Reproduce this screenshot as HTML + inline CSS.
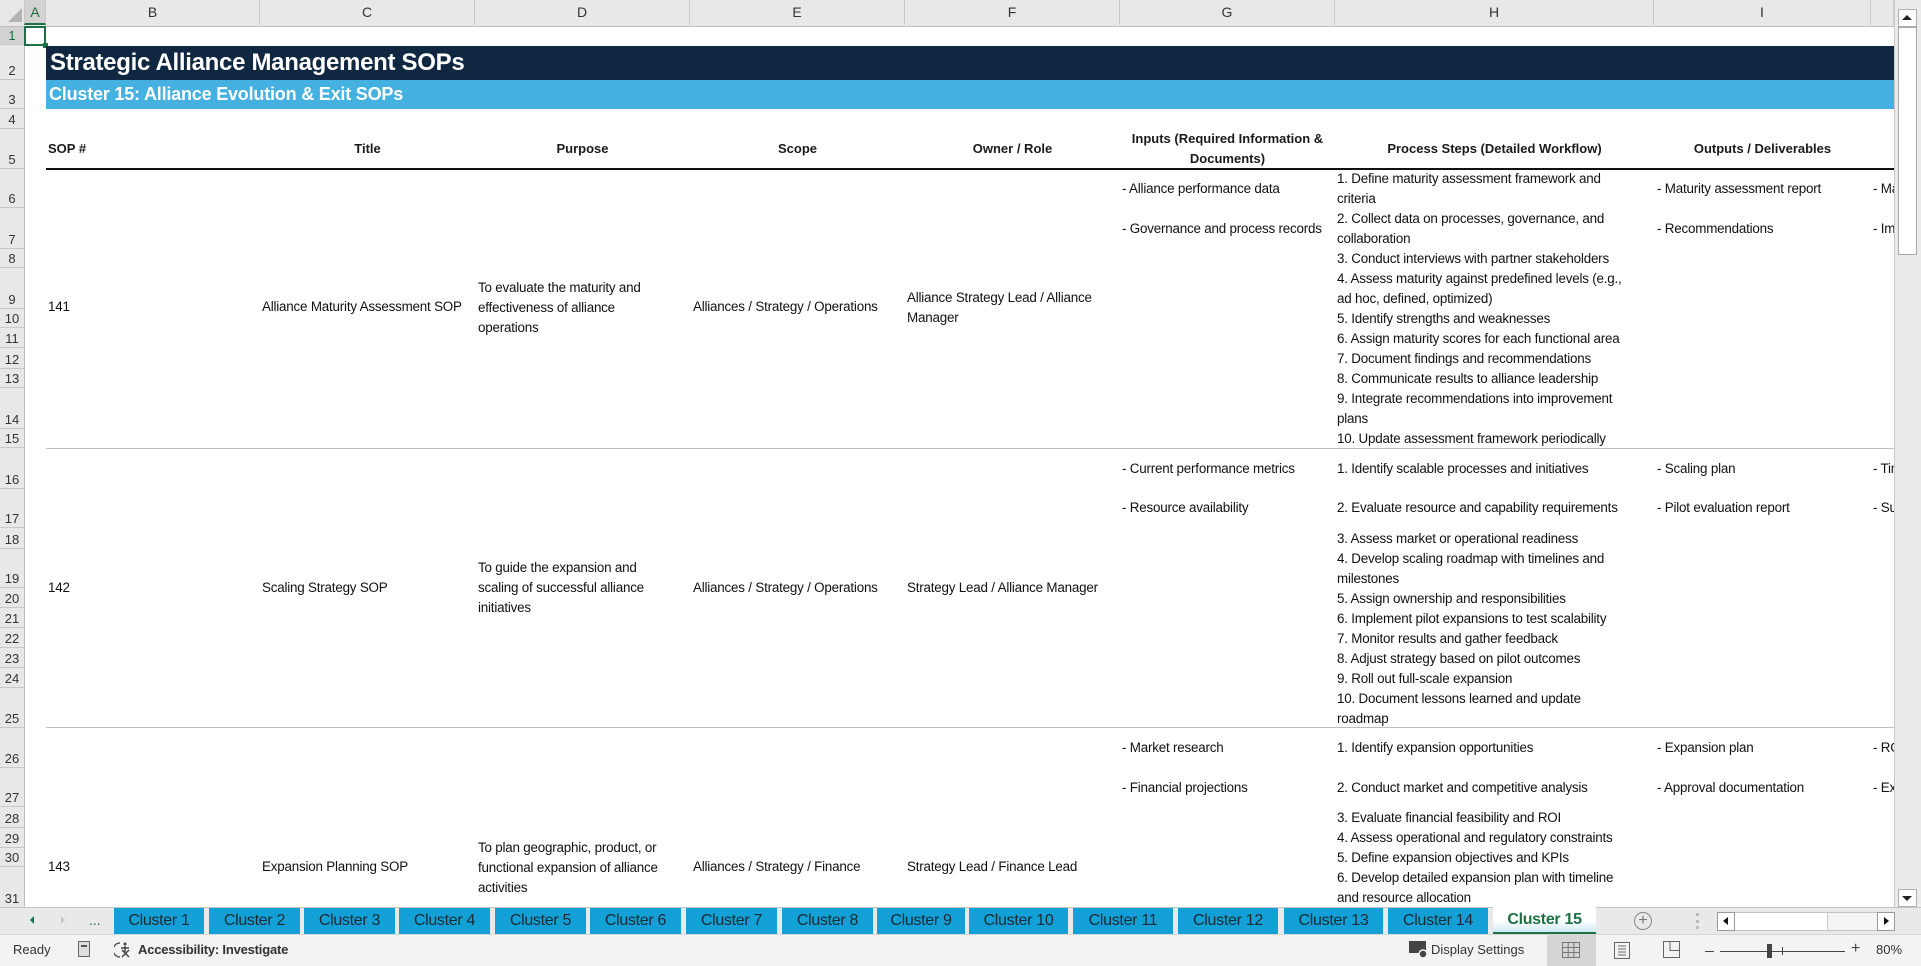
<!DOCTYPE html>
<html><head><meta charset="utf-8"><style>
*{margin:0;padding:0;box-sizing:border-box}
body{width:1921px;height:966px;overflow:hidden;background:#fff;font-family:"Liberation Sans",sans-serif;color:#1a1a1a;position:relative}
.a{position:absolute}
.t{position:absolute;white-space:nowrap;font-size:13.4px;line-height:20px;letter-spacing:-0.2px;color:#111}
.ch{position:absolute;top:0;height:25px;border-right:1px solid #c8c8c8;text-align:center;font-size:14px;line-height:25px;color:#333}
.rh{position:absolute;left:0;width:24px;border-bottom:1px solid #c8c8c8;text-align:center;font-size:13px;color:#333;display:flex;align-items:flex-end;justify-content:center;padding-bottom:1px;background:#e8e8e8}
.hd{position:absolute;top:129px;height:40px;font-weight:bold;font-size:13px;text-align:center;display:flex;align-items:center;justify-content:center;line-height:20px}
.tab{position:absolute;top:908px;height:26px;background:#12a0d6;font-size:16px;line-height:26px;text-align:center;color:#1b2a33;letter-spacing:-0.3px}
</style></head><body>
<div class="a" style="left:0;top:0;width:1921px;height:27px;background:#e8e8e8;border-bottom:1px solid #bdbdbd"></div>
<div class="a" style="left:8px;top:8px;width:0;height:0;border-left:14px solid transparent;border-bottom:14px solid #b4b4b4"></div>
<div class="ch" style="left:24px;width:22px;background:#d2d2d2;color:#1e6b3c;border-bottom:2px solid #1e7145;border-left:1px solid #c8c8c8">A</div>
<div class="ch" style="left:46px;width:214px">B</div>
<div class="ch" style="left:260px;width:215px">C</div>
<div class="ch" style="left:475px;width:215px">D</div>
<div class="ch" style="left:690px;width:215px">E</div>
<div class="ch" style="left:905px;width:215px">F</div>
<div class="ch" style="left:1120px;width:215px">G</div>
<div class="ch" style="left:1335px;width:319px">H</div>
<div class="ch" style="left:1654px;width:217px">I</div>
<div class="ch" style="left:1871px;width:23px"></div>
<div class="a" style="left:0;top:27px;width:25px;height:881px;background:#e8e8e8;border-right:1px solid #bdbdbd"></div>
<div class="rh" style="top:27px;height:18px;background:#d2d2d2;color:#1e6b3c">1</div>
<div class="rh" style="top:45px;height:35px">2</div>
<div class="rh" style="top:80px;height:29px">3</div>
<div class="rh" style="top:109px;height:20px">4</div>
<div class="rh" style="top:129px;height:40px">5</div>
<div class="rh" style="top:169px;height:39px">6</div>
<div class="rh" style="top:208px;height:41px">7</div>
<div class="rh" style="top:249px;height:19px">8</div>
<div class="rh" style="top:268px;height:41px">9</div>
<div class="rh" style="top:309px;height:19px">10</div>
<div class="rh" style="top:328px;height:20px">11</div>
<div class="rh" style="top:348px;height:21px">12</div>
<div class="rh" style="top:369px;height:19px">13</div>
<div class="rh" style="top:388px;height:41px">14</div>
<div class="rh" style="top:429px;height:19px">15</div>
<div class="rh" style="top:448px;height:41px">16</div>
<div class="rh" style="top:489px;height:39px">17</div>
<div class="rh" style="top:528px;height:21px">18</div>
<div class="rh" style="top:549px;height:39px">19</div>
<div class="rh" style="top:588px;height:20px">20</div>
<div class="rh" style="top:608px;height:20px">21</div>
<div class="rh" style="top:628px;height:20px">22</div>
<div class="rh" style="top:648px;height:20px">23</div>
<div class="rh" style="top:668px;height:20px">24</div>
<div class="rh" style="top:688px;height:40px">25</div>
<div class="rh" style="top:728px;height:40px">26</div>
<div class="rh" style="top:768px;height:39px">27</div>
<div class="rh" style="top:807px;height:21px">28</div>
<div class="rh" style="top:828px;height:20px">29</div>
<div class="rh" style="top:848px;height:19px">30</div>
<div class="rh" style="top:867px;height:41px">31</div>
<div class="a" style="left:24px;top:26px;width:22px;height:20px;border:2px solid #1e7145"></div>
<div class="a" style="left:43px;top:43px;width:5px;height:5px;background:#1e7145"></div>
<div class="a" style="left:25px;top:28px;width:1869px;height:880px;overflow:hidden">
<div style="position:relative;left:-25px;top:-28px;width:1921px;height:908px">
<div class="a" style="left:46px;top:46px;width:1848px;height:34px;background:#0f2740"></div>
<div class="a" style="left:50px;top:46px;height:34px;line-height:34px;color:#fff;font-weight:bold;font-size:24px;letter-spacing:-0.3px;white-space:nowrap">Strategic Alliance Management SOPs</div>
<div class="a" style="left:46px;top:80px;width:1848px;height:29px;background:#45b1e0"></div>
<div class="a" style="left:49px;top:80px;height:29px;line-height:28px;color:#fff;font-weight:bold;font-size:18px;letter-spacing:-0.2px;white-space:nowrap">Cluster 15: Alliance Evolution &amp; Exit SOPs</div>
<div class="hd" style="left:48px;justify-content:flex-start">SOP #</div>
<div class="hd" style="left:260px;width:215px">Title</div>
<div class="hd" style="left:475px;width:215px">Purpose</div>
<div class="hd" style="left:690px;width:215px">Scope</div>
<div class="hd" style="left:905px;width:215px">Owner / Role</div>
<div class="hd" style="left:1120px;width:215px">Inputs (Required Information &amp;<br>Documents)</div>
<div class="hd" style="left:1335px;width:319px">Process Steps (Detailed Workflow)</div>
<div class="hd" style="left:1654px;width:217px">Outputs / Deliverables</div>
<div class="a" style="left:46px;top:168px;width:1848px;height:2px;background:#111"></div>
<div class="a" style="left:46px;top:448px;width:1848px;height:1px;background:#bdbdbd"></div>
<div class="a" style="left:46px;top:727px;width:1848px;height:1px;background:#bdbdbd"></div>
<div class="t" style="left:48px;top:297px">141</div>
<div class="t" style="left:262px;top:297px">Alliance Maturity Assessment SOP</div>
<div class="t" style="left:478px;top:278px">To evaluate the maturity and<br>effectiveness of alliance<br>operations</div>
<div class="t" style="left:693px;top:297px">Alliances / Strategy / Operations</div>
<div class="t" style="left:907px;top:288px">Alliance Strategy Lead / Alliance<br>Manager</div>
<div class="t" style="left:1122px;top:179px">- Alliance performance data</div>
<div class="t" style="left:1122px;top:219px">- Governance and process records</div>
<div class="t" style="left:1337px;top:169px">1. Define maturity assessment framework and<br>criteria<br>2. Collect data on processes, governance, and<br>collaboration<br>3. Conduct interviews with partner stakeholders<br>4. Assess maturity against predefined levels (e.g.,<br>ad hoc, defined, optimized)<br>5. Identify strengths and weaknesses<br>6. Assign maturity scores for each functional area<br>7. Document findings and recommendations<br>8. Communicate results to alliance leadership<br>9. Integrate recommendations into improvement<br>plans<br>10. Update assessment framework periodically</div>
<div class="t" style="left:1657px;top:179px">- Maturity assessment report</div>
<div class="t" style="left:1657px;top:219px">- Recommendations</div>
<div class="t" style="left:1873px;top:179px">- Maturity</div>
<div class="t" style="left:1873px;top:219px">- Improvement</div>
<div class="t" style="left:48px;top:578px">142</div>
<div class="t" style="left:262px;top:578px">Scaling Strategy SOP</div>
<div class="t" style="left:478px;top:558px">To guide the expansion and<br>scaling of successful alliance<br>initiatives</div>
<div class="t" style="left:693px;top:578px">Alliances / Strategy / Operations</div>
<div class="t" style="left:907px;top:578px">Strategy Lead / Alliance Manager</div>
<div class="t" style="left:1122px;top:459px">- Current performance metrics</div>
<div class="t" style="left:1122px;top:498px">- Resource availability</div>
<div class="t" style="left:1337px;top:459px">1. Identify scalable processes and initiatives</div>
<div class="t" style="left:1337px;top:498px">2. Evaluate resource and capability requirements</div>
<div class="t" style="left:1337px;top:529px">3. Assess market or operational readiness<br>4. Develop scaling roadmap with timelines and<br>milestones<br>5. Assign ownership and responsibilities<br>6. Implement pilot expansions to test scalability<br>7. Monitor results and gather feedback<br>8. Adjust strategy based on pilot outcomes<br>9. Roll out full-scale expansion<br>10. Document lessons learned and update<br>roadmap</div>
<div class="t" style="left:1657px;top:459px">- Scaling plan</div>
<div class="t" style="left:1657px;top:498px">- Pilot evaluation report</div>
<div class="t" style="left:1873px;top:459px">- Timeline</div>
<div class="t" style="left:1873px;top:498px">- Success</div>
<div class="t" style="left:48px;top:857px">143</div>
<div class="t" style="left:262px;top:857px">Expansion Planning SOP</div>
<div class="t" style="left:478px;top:838px">To plan geographic, product, or<br>functional expansion of alliance<br>activities</div>
<div class="t" style="left:693px;top:857px">Alliances / Strategy / Finance</div>
<div class="t" style="left:907px;top:857px">Strategy Lead / Finance Lead</div>
<div class="t" style="left:1122px;top:738px">- Market research</div>
<div class="t" style="left:1122px;top:778px">- Financial projections</div>
<div class="t" style="left:1337px;top:738px">1. Identify expansion opportunities</div>
<div class="t" style="left:1337px;top:778px">2. Conduct market and competitive analysis</div>
<div class="t" style="left:1337px;top:808px">3. Evaluate financial feasibility and ROI<br>4. Assess operational and regulatory constraints<br>5. Define expansion objectives and KPIs<br>6. Develop detailed expansion plan with timeline<br>and resource allocation</div>
<div class="t" style="left:1657px;top:738px">- Expansion plan</div>
<div class="t" style="left:1657px;top:778px">- Approval documentation</div>
<div class="t" style="left:1873px;top:738px">- ROI</div>
<div class="t" style="left:1873px;top:778px">- Executive</div>
</div></div>
<div class="a" style="left:1894px;top:0;width:27px;height:908px;background:#ebebeb;border-left:1px solid #c8c8c8"></div>
<div class="a" style="left:1898px;top:9px;width:19px;height:18px;background:#fff;border:1px solid #b0b0b0"></div>
<div class="a" style="left:1902px;top:15px;width:0;height:0;border-left:5px solid transparent;border-right:5px solid transparent;border-bottom:5px solid #222"></div>
<div class="a" style="left:1898px;top:27px;width:19px;height:228px;background:#fff;border:1px solid #a8a8a8"></div>
<div class="a" style="left:1898px;top:889px;width:19px;height:18px;background:#fff;border:1px solid #b0b0b0"></div>
<div class="a" style="left:1902px;top:896px;width:0;height:0;border-left:5px solid transparent;border-right:5px solid transparent;border-top:5px solid #222"></div>
<div class="a" style="left:0;top:907px;width:1921px;height:27px;background:#e9e9e9;border-top:1px solid #c4c4c4"></div>
<div class="a" style="left:30px;top:916px;width:0;height:0;border-top:4px solid transparent;border-bottom:4px solid transparent;border-right:4px solid #1e7145"></div>
<div class="a" style="left:61px;top:916px;width:0;height:0;border-top:4px solid transparent;border-bottom:4px solid transparent;border-left:4px solid #c8c8c8"></div>
<div class="a" style="left:89px;top:908px;font-size:14px;line-height:24px;color:#1e7145">...</div>
<div class="tab" style="left:114px;width:90px">Cluster 1</div>
<div class="tab" style="left:209px;width:91px">Cluster 2</div>
<div class="tab" style="left:304px;width:91px">Cluster 3</div>
<div class="tab" style="left:399px;width:91px">Cluster 4</div>
<div class="tab" style="left:495px;width:91px">Cluster 5</div>
<div class="tab" style="left:590px;width:91px">Cluster 6</div>
<div class="tab" style="left:686px;width:91px">Cluster 7</div>
<div class="tab" style="left:782px;width:91px">Cluster 8</div>
<div class="tab" style="left:877px;width:88px">Cluster 9</div>
<div class="tab" style="left:969px;width:99px">Cluster 10</div>
<div class="tab" style="left:1073px;width:100px">Cluster 11</div>
<div class="tab" style="left:1178px;width:100px">Cluster 12</div>
<div class="tab" style="left:1284px;width:99px">Cluster 13</div>
<div class="tab" style="left:1388px;width:100px">Cluster 14</div>
<div class="tab" style="left:1493px;width:103px;top:906px;height:28px;background:linear-gradient(#fff 55%,#cfeaf5);color:#1e7145;font-weight:bold;border-bottom:2px solid #1e7145;line-height:28px">Cluster 15</div>
<div class="a" style="left:1634px;top:912px;width:18px;height:18px;border:1.5px solid #888;border-radius:50%;text-align:center;line-height:15px;font-size:16px;color:#777">+</div>
<div class="a" style="left:1696px;top:913px;width:3px;height:16px;border-left:3px dotted #bbb"></div>
<div class="a" style="left:1717px;top:912px;width:178px;height:19px;background:#f4f4f4;border:1px solid #c4c4c4"></div>
<div class="a" style="left:1717px;top:912px;width:18px;height:19px;background:#fff;border:1px solid #999"></div>
<div class="a" style="left:1723px;top:917px;width:0;height:0;border-top:4.5px solid transparent;border-bottom:4.5px solid transparent;border-right:5px solid #111"></div>
<div class="a" style="left:1735px;top:913px;width:93px;height:17px;background:#fff;border-right:1px solid #ccc"></div>
<div class="a" style="left:1877px;top:912px;width:18px;height:19px;background:#fff;border:1px solid #999"></div>
<div class="a" style="left:1884px;top:917px;width:0;height:0;border-top:4.5px solid transparent;border-bottom:4.5px solid transparent;border-left:5px solid #111"></div>
<div class="a" style="left:0;top:934px;width:1921px;height:32px;background:#f3f3f3;border-top:1px solid #d6d6d6"></div>
<div class="a" style="left:13px;top:942px;font-size:13px;color:#333">Ready</div>
<div class="a" style="left:78px;top:941px;width:12px;height:16px;border:1px solid #666;background:#ddd"></div>
<div class="a" style="left:81px;top:945px;width:6px;height:2px;background:#555"></div>
<svg class="a" style="left:114px;top:941px" width="20" height="18" viewBox="0 0 20 18"><path d="M6 2 A7 7 0 0 0 6 16" fill="none" stroke="#444" stroke-width="1.3"/><circle cx="11" cy="3" r="1.5" fill="#444"/><path d="M7 7 H15 M11 5 V11 M8 16 L15 9 M8 9 L15 16" stroke="#444" stroke-width="1.5"/></svg>
<div class="a" style="left:138px;top:942px;font-size:13px;font-weight:bold;color:#333;letter-spacing:-0.2px">Accessibility: Investigate</div>
<svg class="a" style="left:1408px;top:940px" width="22" height="20" viewBox="0 0 22 20"><rect x="1" y="1" width="17" height="12" fill="#444"/><circle cx="15" cy="14" r="4" fill="#444" stroke="#f3f3f3" stroke-width="1.5"/></svg>
<div class="a" style="left:1431px;top:942px;font-size:13px;color:#333">Display Settings</div>
<div class="a" style="left:1547px;top:935px;width:49px;height:31px;background:#d5d5d5"></div>
<svg class="a" style="left:1562px;top:942px" width="18" height="16" viewBox="0 0 18 16"><path d="M0.5 0.5H17.5V15.5H0.5Z M6.2 0.5V15.5 M11.8 0.5V15.5 M0.5 5.5H17.5 M0.5 10.5H17.5" fill="none" stroke="#777"/></svg>
<svg class="a" style="left:1614px;top:942px" width="16" height="17" viewBox="0 0 16 17"><path d="M0.5 0.5H15.5V16.5H0.5Z M4 4H12 M4 7H12 M4 10H12 M4 13H12" fill="none" stroke="#666"/></svg>
<svg class="a" style="left:1663px;top:941px" width="17" height="17" viewBox="0 0 17 17"><path d="M0.5 0.5H16.5V16.5H0.5Z M7 0.5V9.5H16.5" fill="none" stroke="#666"/></svg>
<div class="a" style="left:1705px;top:951px;width:9px;height:1px;background:#444"></div>
<div class="a" style="left:1720px;top:951px;width:125px;height:1px;background:#444"></div>
<div class="a" style="left:1767px;top:944px;width:5px;height:14px;background:#444"></div>
<div class="a" style="left:1782px;top:947px;width:1px;height:8px;background:#444"></div>
<div class="a" style="left:1851px;top:940px;font-size:16px;color:#444">+</div>
<div class="a" style="left:1876px;top:942px;font-size:13px;color:#333">80%</div>
</body></html>
